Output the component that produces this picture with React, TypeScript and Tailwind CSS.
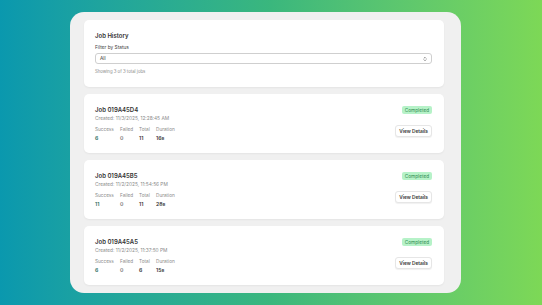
import React from "react";

type Job = {
  id: string;
  created: string;
  success: number;
  failed: number;
  total: number;
  duration: string;
};

const jobs: Job[] = [
  { id: "019A45D4", created: "11/3/2025, 12:28:45 AM", success: 6, failed: 0, total: 11, duration: "16s" },
  { id: "019A45B5", created: "11/2/2025, 11:54:56 PM", success: 11, failed: 0, total: 11, duration: "28s" },
  { id: "019A45A5", created: "11/2/2025, 11:37:50 PM", success: 6, failed: 0, total: 6, duration: "15s" },
];

function Stat({ label, value, valueClass }: { label: string; value: React.ReactNode; valueClass: string }) {
  return (
    <div className="flex flex-col gap-[3px]">
      <span className="text-[4.7px] leading-[6px] text-[#8a8a8a]">{label}</span>
      <span className={`text-[5.2px] leading-[7px] font-semibold ${valueClass}`}>{value}</span>
    </div>
  );
}

function JobCard({ job }: { job: Job }) {
  return (
    <div className="bg-white rounded-[5px] shadow-[0_1px_2px_rgba(0,0,0,0.05)] h-[59px] pl-[11px] pr-[12px] flex justify-between">
      <div className="pt-[12px]">
        <div className="text-[6px] leading-[8px] font-semibold text-[#333]">Job {job.id}</div>
        <div className="text-[4.8px] leading-[7px] text-[#8a8a8a] mt-[1px]">Created: {job.created}</div>
        <div className="flex gap-[7px] mt-[4px]">
          <div className="w-[18px]"><Stat label="Success" value={job.success} valueClass="text-[#1f6b5a]" /></div>
          <div className="w-[12px]"><Stat label="Failed" value={job.failed} valueClass="text-[#777]" /></div>
          <div className="w-[10px]"><Stat label="Total" value={job.total} valueClass="text-[#333]" /></div>
          <Stat label="Duration" value={job.duration} valueClass="text-[#333]" />
        </div>
      </div>
      <div className="pt-[12px] flex flex-col items-end">
        <span className="bg-[#b6f2c8] text-[#2f8a4e] text-[4.7px] leading-[8px] px-[3px] rounded-[2px]">Completed</span>
        <button className="mt-[11px] bg-white border border-[#e6e6e6] shadow-[0_1px_1px_rgba(0,0,0,0.06)] rounded-[3px] text-[4.8px] leading-[10px] font-semibold text-[#333] px-[3px]">
          View Details
        </button>
      </div>
    </div>
  );
}

export default function App() {
  return (
    <div
      className="w-[542px] h-[305px] bg-gradient-to-r from-[#0a98ae] via-[#3ab77d] to-[#7dd856] pt-[12px] pl-[70px]"
      style={{ fontFamily: "Inter, 'Liberation Sans', sans-serif" }}
    >
      <div className="w-[391px] h-[281px] bg-[#f0f0f0] rounded-[14px] pt-[8px] pl-[14px] pr-[17px] flex flex-col gap-[7px]">
        <div className="bg-white rounded-[5px] shadow-[0_1px_2px_rgba(0,0,0,0.05)] h-[67px] pl-[11px] pr-[12px] pt-[12px]">
          <div className="text-[6px] leading-[8px] font-semibold text-[#333]">Job History</div>
          <div className="text-[4.8px] leading-[7px] text-[#444] mt-[4px]">Filter by Status</div>
          <div className="mt-[2px] h-[11px] border border-[#cfcfcf] rounded-[3px] flex items-center justify-between px-[4px]">
            <span className="text-[4.8px] text-[#333]">All</span>
            <svg width="4" height="6" viewBox="0 0 8 12" fill="none" stroke="#666" strokeWidth="1.4" strokeLinecap="round" strokeLinejoin="round">
              <path d="M2 4.5 L4 2.5 L6 4.5" />
              <path d="M2 7.5 L4 9.5 L6 7.5" />
            </svg>
          </div>
          <div className="text-[4.3px] leading-[7px] text-[#8a8a8a] mt-[4px]">Showing 3 of 3 total jobs</div>
        </div>
        {jobs.map((job) => (
          <JobCard key={job.id} job={job} />
        ))}
      </div>
    </div>
  );
}
